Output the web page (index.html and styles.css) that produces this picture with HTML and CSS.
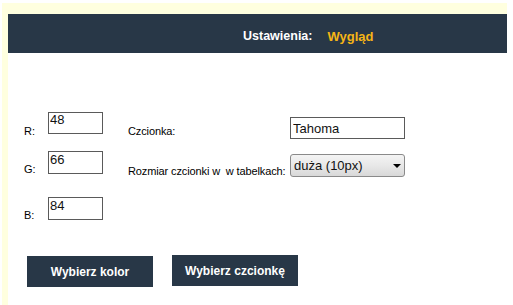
FILE: index.html
```html
<!DOCTYPE html>
<html lang="pl">
<head>
<meta charset="utf-8">
<title>Ustawienia: Wygląd</title>
<link rel="stylesheet" href="styles.css">
</head>
<body>
<div class="frame">
  <div class="header">
    <span class="h-label">Ustawienia:</span>
    <span class="h-value">Wygląd</span>
  </div>
  <div class="content">
    <div class="row row1">
      <label class="lbl lbl-rgb">R:</label>
      <input class="num" type="text" value="48">
      <label class="lbl lbl-wide">Czcionka:</label>
      <input class="font-input" type="text" value="Tahoma">
    </div>
    <div class="row row2">
      <label class="lbl lbl-rgb">G:</label>
      <input class="num" type="text" value="66">
      <label class="lbl lbl-wide">Rozmiar czcionki w&nbsp; w tabelkach:</label>
      <div class="select" role="combobox" aria-expanded="false">
        <span class="select-text">duża (10px)</span>
        <span class="select-arrow"></span>
      </div>
    </div>
    <div class="row row3">
      <label class="lbl lbl-rgb">B:</label>
      <input class="num" type="text" value="84">
    </div>
    <div class="buttons">
      <button class="btn btn-color" type="button">Wybierz kolor</button>
      <button class="btn btn-font" type="button">Wybierz czcionkę</button>
    </div>
  </div>
</div>
</body>
</html>
```
FILE: styles.css
```css
html, body {
  margin: 0;
  padding: 0;
  background: #ffffff;
}

body {
  font-family: "Liberation Sans", Arial, sans-serif;
  font-size: 11px;
  color: #000;
}

.frame {
  box-sizing: border-box;
  margin: 3px 0 0 2px;
  width: 505px;
  height: 302px;
  padding: 11px 0 0 6px;
  background: #ffffdf;
  display: flex;
  flex-direction: column;
  overflow: hidden;
}

.header {
  box-sizing: border-box;
  height: 39px;
  flex: none;
  background: #283747;
  display: flex;
  align-items: center;
  padding: 5px 0 0 235px;
  font-weight: bold;
}

.h-label {
  color: #ffffff;
  font-size: 12.5px;
}

.h-value {
  color: #f5b516;
  font-size: 13px;
  margin-left: 15px;
}

.content {
  flex: 1;
  background: #ffffff;
  padding: 59px 0 0 16px;
}

.row {
  display: flex;
  align-items: flex-start;
}

.lbl {
  line-height: 14px;
  white-space: nowrap;
  font-size: 11px;
}

.lbl-rgb {
  width: 24px;
}

.lbl-wide {
  width: 162px;
  letter-spacing: -0.12px;
}

.num {
  box-sizing: border-box;
  width: 55px;
  height: 22px;
  margin: 0 25px 0 0;
  padding: 0 0 7px 1px;
  border: 1px solid #5a5a5a;
  font-family: "Liberation Sans", Arial, sans-serif;
  font-size: 13px;
  line-height: 14px;
  color: #111;
  background: #fff;
  outline: none;
}

.font-input {
  box-sizing: border-box;
  width: 115px;
  height: 22px;
  margin: 5px 0 0 0;
  padding: 0 0 0 2px;
  border: 1px solid #5a5a5a;
  font-family: "Liberation Sans", Arial, sans-serif;
  font-size: 13px;
  color: #111;
  background: #fff;
  outline: none;
}

.row1 {
  height: 27px;
}

.row1 .lbl {
  margin-top: 12px;
}

.row2 {
  margin-top: 12px;
  height: 25px;
}

.row2 .num {
  height: 23px;
}

.row2 .lbl-rgb {
  margin-top: 11px;
}

.row2 .lbl-wide {
  margin-top: 13px;
}

.row3 {
  margin-top: 21px;
  height: 23px;
}

.row3 .num {
  height: 23px;
}

.row3 .lbl-rgb {
  margin-top: 11px;
}

.select {
  box-sizing: border-box;
  width: 115px;
  height: 23px;
  margin-top: 3px;
  padding: 0 3px 0 3px;
  border: 1px solid #8a8a8a;
  border-radius: 3px;
  background: linear-gradient(#f4f4f4, #e8e8e8 50%, #d8d8d8);
  display: flex;
  align-items: center;
  justify-content: space-between;
  font-size: 13px;
  color: #111;
}

.select-arrow {
  width: 0;
  height: 0;
  border-left: 4px solid transparent;
  border-right: 4px solid transparent;
  border-top: 4px solid #000;
  margin-top: 1px;
}

.buttons {
  display: flex;
  align-items: flex-start;
  margin-top: 35px;
}

.btn {
  box-sizing: border-box;
  width: 126px;
  height: 31px;
  border: none;
  background: #283747;
  color: #ffffff;
  font-family: "Liberation Sans", Arial, sans-serif;
  font-size: 12px;
  font-weight: bold;
  padding: 0;
}

.btn-color {
  margin: 1px 0 0 3px;
}

.btn-font {
  margin-left: 19px;
}
```
